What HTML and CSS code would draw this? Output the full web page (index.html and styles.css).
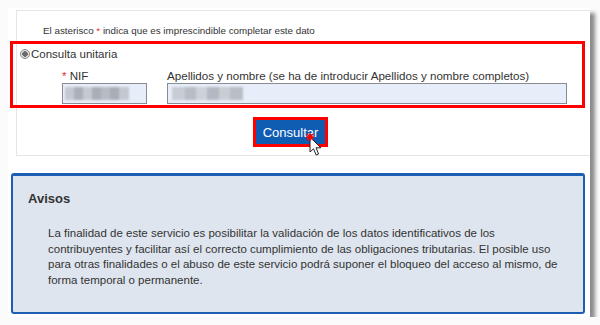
FILE: index.html
```html
<!DOCTYPE html>
<html lang="es">
<head>
    <meta charset="UTF-8">
    <title>Consulta NIF</title>
    <link rel="stylesheet" href="styles.css">
</head>
<body>
<div class="frame">
    <div class="form-box">
        <p class="note">El asterisco <span class="req">*</span> indica que es imprescindible completar este dato</p>

        <div class="unit">
            <label class="radio-row">
                <span class="radio"></span>Consulta unitaria
            </label>
            <div class="fields">
                <div class="field field-nif">
                    <span class="field-label"><span class="req">*</span> NIF</span>
                    <div class="input"><span class="blur blur-nif"></span></div>
                </div>
                <div class="field field-name">
                    <span class="field-label">Apellidos y nombre (se ha de introducir Apellidos y nombre completos)</span>
                    <div class="input"><span class="blur blur-name"></span></div>
                </div>
            </div>
        </div>

        <div class="actions">
            <div class="highlight">
                <button class="btn">Consultar</button>
            </div>
            <svg class="cursor" width="16" height="22" viewBox="0 0 16 22">
                <path d="M1 1 L1 16 L4.5 12.8 L7.2 19 L9.6 18 L7 11.8 L11.8 11.8 Z" fill="#fff" stroke="#222" stroke-width="1"/>
                <path d="M1 -3 L1 5 M-3 1 L5 1 M-2 -2 L4 4 M4 -2 L-2 4" stroke="#f00" stroke-width="1.4"/>
            </svg>
        </div>
    </div>

    <div class="avisos">
        <h2>Avisos</h2>
        <p>La finalidad de este servicio es posibilitar la validación de los datos identificativos de los<br>
            contribuyentes y facilitar así el correcto cumplimiento de las obligaciones tributarias. El posible uso<br>
            para otras finalidades o el abuso de este servicio podrá suponer el bloqueo del acceso al mismo, de<br>
            forma temporal o permanente.</p>
    </div>
</div>
</body>
</html>
```

FILE: styles.css
```css
* {
    margin: 0;
    padding: 0;
    box-sizing: border-box;
}

body {
    font-family: 'Liberation Sans', Arial, sans-serif;
    background-color: #fbfbfb;
    color: #3a3a3a;
    padding: 8px 0 0 8px;
}

/* ventana con sombra */
.frame {
    width: 582px;
    height: 309px;
    background-color: #fff;
    box-shadow: 5px 5px 4px rgba(0, 0, 0, 0.45);
    overflow: hidden;
    padding-top: 2px;
}

.form-box {
    margin-left: 8px;
    border: 1px solid #e2e6eb;
    border-right: none;
    padding-bottom: 8px;
}

.note {
    font-size: 9.8px;
    line-height: 14px;
    padding: 13px 0 0 26px;
    color: #333;
}

.req {
    color: #e03030;
}

/* recuadro rojo de la consulta */
.unit {
    width: 575px;
    margin: 3px 0 0 -7px;
    border: 3px solid #f00;
    padding: 2px 0 0 7px;
    height: 67px;
}

.radio-row {
    display: flex;
    align-items: center;
    height: 16px;
    font-size: 11.5px;
    color: #333;
}

.radio {
    width: 10px;
    height: 10px;
    border-radius: 50%;
    border: 1px solid #8a8a8a;
    background: radial-gradient(circle, #6a6a6a 0 2.5px, #e0e0e0 3px);
    margin-right: 1px;
}

.fields {
    display: flex;
    gap: 20px;
    padding-left: 42px;
    margin-top: 6px;
}

.field {
    display: flex;
    flex-direction: column;
}

.field-label {
    font-size: 11.6px;
    line-height: 15px;
    color: #333;
}

.input {
    height: 21px;
    border: 1px solid #888c92;
    background-color: #e8eef9;
    padding: 3px 0 0 2px;
}

.field-nif .input {
    width: 85px;
}

.field-name .input {
    width: 400px;
    padding-left: 4px;
}

.blur {
    display: block;
    height: 13px;
    filter: blur(0.8px);
    background: linear-gradient(90deg, #c4c8d0 0 14%, #aab0ba 14% 28%, #c6c9d0 28% 42%, #a9aeb7 42% 56%, #b6bbc4 56% 70%, #a8adb6 70% 84%, #c3c7cf 84%);
}

.blur-nif {
    width: 64px;
}

.blur-name {
    width: 71px;
    background: linear-gradient(90deg, #c8ccd4 0 18%, #b7bcc6 18% 34%, #cdd1d8 34% 50%, #b3b8c2 50% 66%, #c9cdd4 66% 82%, #b9bdc6 82%);
}

.actions {
    position: relative;
    padding: 9px 0 0 236px;
}

.highlight {
    display: inline-block;
    border: 3px solid #f00;
}

.btn {
    display: block;
    width: 69px;
    height: 24px;
    border: none;
    background-color: #0f5cb3;
    color: #fff;
    font-family: 'Liberation Sans', Arial, sans-serif;
    font-size: 13px;
}

.cursor {
    position: absolute;
    left: 292px;
    top: 28px;
    overflow: visible;
}

/* caja de avisos */
.avisos {
    width: 574px;
    height: 141px;
    margin: 17px 0 0 3px;
    background-color: #dee5ee;
    border: 2px solid #1e5fb3;
    border-top-width: 3px;
    border-radius: 3px;
    padding: 15px 0 0 15px;
}

.avisos h2 {
    font-size: 13px;
    line-height: 16px;
    color: #333;
}

.avisos p {
    font-size: 11.5px;
    line-height: 15.7px;
    color: #333;
    margin: 19px 0 0 20px;
    white-space: nowrap;
}
```
